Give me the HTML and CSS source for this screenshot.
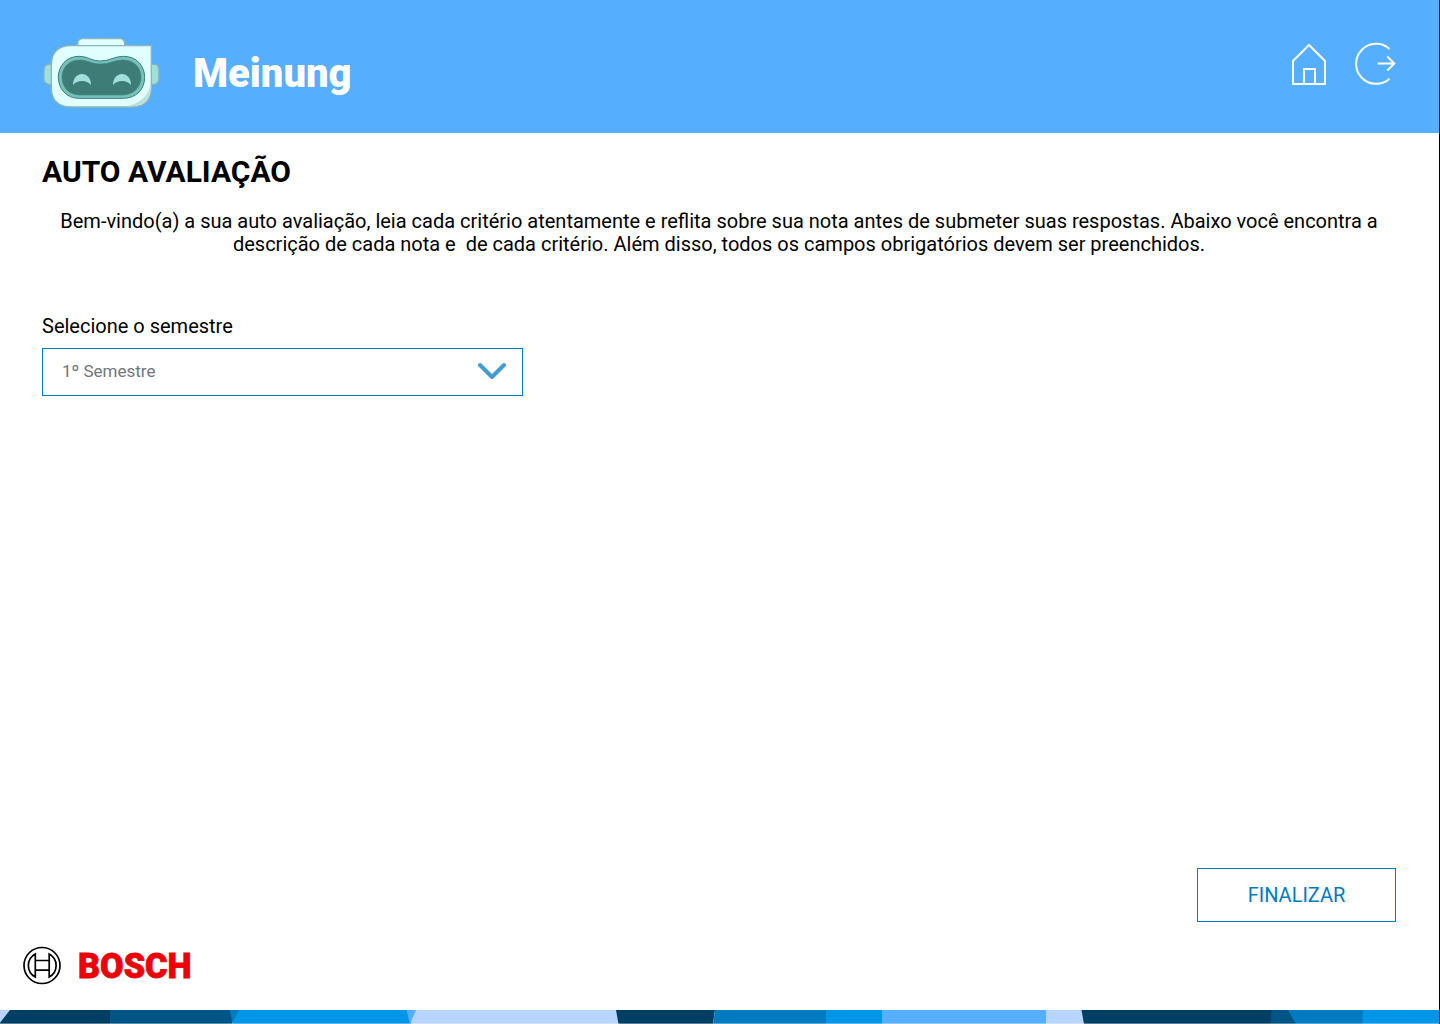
FILE: index.html
```html
<!DOCTYPE html>
<html lang="pt-BR">
<head>
<meta charset="utf-8">
<title>Meinung</title>
<link rel="stylesheet" href="styles.css">
</head>
<body>
<div class="page">
  <header class="header">
    <svg class="robot" viewBox="0 0 420 285" aria-hidden="true">
      <g stroke="#8fb5b6" stroke-width="4">
        <path d="M66 118h-6q-18 0-18 18v24q0 18 18 18h6zM364 118h8q14 0 14 18v24q0 18-14 18h-8z" fill="#a1dfdd"/>
        <path d="M143 64v-7q0-16 16-16h110q15 0 15 16v7z" fill="#e1fffc"/>
        <path d="M124 62H364V186q0 60-60 60H124q-60 0-60-60V122q0-60 60-60Z" fill="#e1fffc"/>
      </g>
      <path d="M361 176q-5 50-70 68h12q58 0 58-58Z" fill="#bde0df"/>
      <path d="M147 94c27 0 37 14 65 14s40-14 68-14c40 0 64 29 64 63s-24 63-64 63H147c-38 0-62-29-62-63s24-63 62-63Z" fill="#75c2bb" stroke="#3c7e7a" stroke-width="3"/>
      <path d="M149 105c24 0 36 12 63 12s40-12 66-12c35 0 55 23 55 52s-22 53-55 53H149c-32 0-53-24-53-53s21-52 53-52Z" fill="#3e7d77" stroke="#44847e" stroke-width="2"/>
      <path d="M129 180c0-18 10-33 27-33s27 15 27 33q-10-12-27-12t-27 12ZM249 180c0-18 10-33 27-33s27 15 27 33q-10-12-27-12t-27 12Z" fill="#a1dfdd"/>
    </svg>
    <div class="brand">Meinung</div>
    <nav class="actions">
      <svg class="icon" viewBox="0 0 44 50" aria-label="Início"><path d="M5 46V23L21 7l16 16v23ZM16 46V31h11v15"/></svg>
      <svg class="icon" viewBox="0 0 44 50" aria-label="Sair"><path d="M36.500 11A20 20 0 1 0 36.500 40.700M24.500 25.500H41.500M34.300 18.500l7 7-7 7"/></svg>
    </nav>
  </header>
  <main class="content">
    <h1 class="title">AUTO AVALIAÇÃO</h1>
    <p class="intro">Bem-vindo(a) a sua auto avaliação, leia cada critério atentamente e reflita sobre sua nota antes de submeter suas respostas. Abaixo você encontra a<br>descrição de cada nota e&nbsp; de cada critério. Além disso, todos os campos obrigatórios devem ser preenchidos.</p>
    <div class="label">Selecione o semestre</div>
    <div class="select">
      <span>1º Semestre</span>
      <svg class="chevron" viewBox="0 0 30 20"><path d="M3 4l12 12L27 4"/></svg>
    </div>
    <button class="submit">FINALIZAR</button>
  </main>
  <footer class="footer">
    <svg class="bosch" viewBox="0 0 180 50" aria-label="Bosch">
      <g fill="none" stroke="#000" stroke-width="1.7">
        <circle cx="19" cy="20.500" r="18"/>
        <path d="M12.300 9a13 13 0 0 0 0 23ZM26.200 9a13 13 0 0 1 0 23ZM12.300 15.500h13.900M12.300 25.100h13.900"/>
      </g>
      <text class="wordmark" x="55" y="32.500" textLength="113.500" lengthAdjust="spacingAndGlyphs">BOSCH</text>
    </svg>
  </footer>
  <svg class="stripe" viewBox="0 0 1439 14" preserveAspectRatio="none" aria-hidden="true">
    <path fill="#b8d5ff" d="M0 0H20V14H0ZM410 0H625V14H410ZM1046 0H1090V14H1046Z"/>
    <path fill="#003f64" d="M10 0H110V14H-1ZM616 0H715L713 14H618.500ZM1081.500 0H1272V14H1084Z"/>
    <path fill="#005587" d="M110 0H232V14H110ZM1271.500 0H1300V14H1271Z"/>
    <path fill="#007bc0" d="M230 0H240V14H232.500ZM715 0H826V14H713ZM1288 0H1364V14H1296Z"/>
    <path fill="#0096e8" d="M239 0H408L411 14H232ZM826 0H882V14H826ZM1363 0H1439V14H1362.500Z"/>
    <path fill="#56aeff" d="M406.500 0H416L410 14ZM882 0H1046V14H882Z"/>
    <path fill="#fff" opacity=".35" d="M0 13H1439V14H0Z"/>
  </svg>
</div>
</body>
</html>
```
FILE: styles.css
```css
* { box-sizing: border-box; }

body {
  margin: 0;
  font-family: Roboto, "Liberation Sans", sans-serif;
  color: #000;
}

.page {
  display: flex;
  flex-direction: column;
  width: 1440px;
  height: 1024px;
  border-right: 1px solid #000;
  background: #fff;
  overflow: hidden;
}

.header {
  display: flex;
  align-items: flex-start;
  height: 133px;
  padding: 25px 42px 0 30px;
  background: #56aeff;
}

.robot { width: 140px; height: 95px; }

.brand {
  margin: 25px 0 0 23px;
  color: #fff;
  font-size: 40px;
  font-weight: 900;
  line-height: 47px;
}

.actions {
  display: flex;
  gap: 21px;
  margin: 13px 0 0 auto;
}

.icon {
  width: 44px;
  height: 50px;
  fill: none;
  stroke: #fff;
  stroke-width: 2;
}

.content {
  display: flex;
  flex: 1;
  flex-direction: column;
  padding: 21px 43px 0 42px;
}

.title {
  margin: 0;
  font-size: 30px;
  font-weight: 700;
  line-height: 35px;
}

.intro {
  margin: 21px 0 0;
  font-size: 20px;
  line-height: 23px;
  text-align: center;
  white-space: nowrap;
}

.label {
  margin-top: 59px;
  font-size: 20px;
  line-height: 23px;
}

.select {
  display: flex;
  align-items: center;
  justify-content: space-between;
  width: 481px;
  height: 48px;
  margin-top: 10px;
  padding: 0 15px 2px 19px;
  border: 1px solid #007bc0;
  color: #71767c;
  font-size: 17px;
}

.chevron {
  width: 30px;
  height: 20px;
  fill: none;
  stroke: #409cd2;
  stroke-width: 4;
  stroke-linecap: round;
  stroke-linejoin: round;
}

.submit {
  align-self: flex-end;
  width: 199px;
  height: 54px;
  margin-top: auto;
  padding: 0;
  border: 1px solid #007bc0;
  background: #fff;
  color: #007bc0;
  font: 20px/23px Roboto, "Liberation Sans", sans-serif;
}

.footer {
  display: flex;
  height: 88px;
  padding: 23px 0 0 23px;
}

.bosch { width: 180px; height: 50px; overflow: visible; }

.wordmark {
  fill: #ed0007;
  stroke: #ed0007;
  stroke-width: 0.8;
  font-size: 35px;
  font-weight: 900;
}

.stripe { display: block; width: 1439px; height: 14px; }
```
